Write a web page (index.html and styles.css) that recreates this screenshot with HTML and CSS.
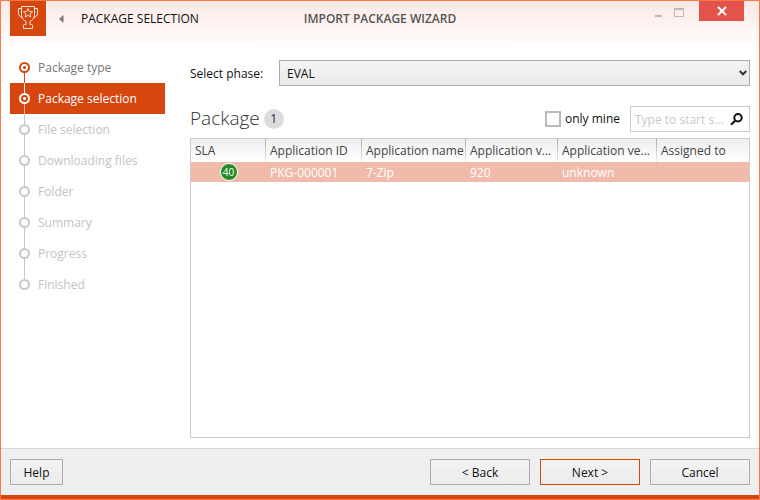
FILE: index.html
```html
<!DOCTYPE html>
<html lang="en">
<head>
<meta charset="utf-8">
<meta name="viewport" content="width=device-width, initial-scale=1">
<title>Import package wizard</title>
<link rel="stylesheet" href="styles.css">
</head>
<body>
<div class="window">
  <header class="titlebar">
    <div class="titlebar-left">
      <svg class="logo" width="36" height="35" viewBox="0 0 36 35" fill="none" stroke="#fbe0d5" stroke-width="1">
        <path d="M11.500 5.500h13v8c0 3-1.500 5.500-4.500 7v3h1.500c.6 0 1 .4 1 1v3h-9v-3c0-.6.4-1 1-1H16v-3c-3-1.500-4.500-4-4.500-7z"/>
        <path d="M11.500 7.500h-3v4.500c0 2.500 1.500 4 4 4.500M24.500 7.500h3v4.500c0 2.500-1.500 4-4 4.500"/>
        <path d="M18 7.500l1.300 3 3.200.3-2.400 2.100.7 3.100-2.800-1.600-2.800 1.600.7-3.100-2.400-2.100 3.200-.3z"/>
      </svg>
      <button class="back-arrow" type="button" aria-label="Previous page"><svg width="5" height="8" viewBox="0 0 5 8"><path d="M4.500 0v8L0 4z" fill="#7f7b7a"/></svg></button>
      <span class="page-name">PACKAGE SELECTION</span>
    </div>
    <h1 class="window-title">IMPORT PACKAGE WIZARD</h1>
    <div class="window-controls">
      <button class="control" type="button" aria-label="Minimize"><svg width="8" height="12" viewBox="0 0 8 12"><path d="M0 8h7v2H0z" fill="#bdb7b5"/></svg></button>
      <button class="control" type="button" aria-label="Maximize"><svg width="11" height="10" viewBox="0 0 11 10"><path d="M0 0h10v9H0zM1 2v6h8V2z" fill="#bdb7b5" fill-rule="evenodd"/></svg></button>
      <button class="control close" type="button" aria-label="Close"><svg width="10" height="10" viewBox="0 0 10 10"><path d="M1 1l8 8M9 1L1 9" stroke="#fff" stroke-width="2"/></svg></button>
    </div>
  </header>

  <div class="body">
    <nav aria-label="Wizard steps">
      <ol class="steps">
        <li class="step done"><span class="marker"></span>Package type</li>
        <li class="step active" aria-current="step"><span class="marker"></span>Package selection</li>
        <li class="step"><span class="marker"></span>File selection</li>
        <li class="step"><span class="marker"></span>Downloading files</li>
        <li class="step"><span class="marker"></span>Folder</li>
        <li class="step"><span class="marker"></span>Summary</li>
        <li class="step"><span class="marker"></span>Progress</li>
        <li class="step"><span class="marker"></span>Finished</li>
      </ol>
    </nav>

    <main class="content">
      <div class="phase">
        <label class="phase-label" for="phase">Select phase:</label>
        <div class="select-box">
          <select id="phase"><option>EVAL</option></select>
          <svg class="chevron" width="8" height="6" viewBox="0 0 8 6" fill="none" stroke="#333" stroke-width="2"><path d="M.7 1L4 4.300 7.300 1"/></svg>
        </div>
      </div>

      <div class="toolbar">
        <h2 class="heading">Package</h2>
        <span class="count">1</span>
        <label class="only-mine"><input type="checkbox">only mine</label>
        <div class="search">
          <input type="text" placeholder="Type to start s..." aria-label="Search packages">
          <svg width="13" height="13" viewBox="0 0 13 13" fill="none" stroke="#111" stroke-width="2"><circle cx="8" cy="4.800" r="3.700"/><path d="M5.300 7.500L1 11.800"/></svg>
        </div>
      </div>

      <div class="grid">
        <table>
          <colgroup><col class="c-sla"><col class="c-id"><col class="c-name"><col class="c-version"><col class="c-vendor"><col></colgroup>
          <thead>
            <tr><th>SLA</th><th>Application ID</th><th>Application name</th><th>Application v...</th><th>Application ve...</th><th>Assigned to</th></tr>
          </thead>
          <tbody>
            <tr><td class="sla"><span class="sla-badge">40</span></td><td>PKG-000001</td><td>7-Zip</td><td>920</td><td>unknown</td><td></td></tr>
          </tbody>
        </table>
      </div>
    </main>
  </div>

  <footer class="footer">
    <button class="btn help" type="button">Help</button>
    <button class="btn" type="button">&lt; Back</button>
    <button class="btn primary" type="button">Next &gt;</button>
    <button class="btn" type="button">Cancel</button>
  </footer>
</div>
</body>
</html>
```
FILE: styles.css
```css
* {
  box-sizing: border-box;
}

body {
  margin: 0;
  font: 12px/16px "Open Sans", "Noto Sans", sans-serif;
  color: #111;
}

button,
input,
select {
  font: inherit;
  color: inherit;
}

.window {
  display: flex;
  flex-direction: column;
  min-height: 100vh;
  border: 1px solid #ff7845;
  background: #fff linear-gradient(#fbe9e5, #fff 50px) no-repeat;
}

/* Title bar */

.titlebar {
  display: grid;
  grid-template-columns: 1fr auto 1fr;
  align-items: center;
  padding: 0 9px;
}

.titlebar-left {
  display: flex;
  align-items: center;
  white-space: nowrap;
}

.logo {
  flex: none;
  background: #d5470f;
}

.back-arrow {
  display: flex;
  flex: none;
  margin: 0 17px 0 13px;
  padding: 0;
  border: 0;
  background: none;
}

.window-title {
  margin: 0;
  font-size: 12px;
  font-weight: 600;
  color: #555;
}

.window-controls {
  display: flex;
  align-self: start;
  justify-content: flex-end;
  margin-right: 6px;
}

.control {
  display: flex;
  align-items: center;
  justify-content: center;
  width: 20px;
  height: 24px;
  padding: 0;
  border: 0;
  background: none;
}

.control.close {
  width: 45px;
  height: 20px;
  margin-left: 10px;
  background: #e2544b;
}

/* Body */

.body {
  display: flex;
  flex: 1;
  gap: 25px;
  padding: 0 9px 10px;
}

.steps {
  width: 155px;
  margin: 0;
  padding: 16px 0 0;
  list-style: none;
}

.step {
  display: flex;
  align-items: center;
  gap: 8px;
  height: 31px;
  padding-left: 9px;
  color: #c3c3c3;
  --line: #c8c8c8;
  --line-next: #c8c8c8;
  --fill: #fff;
}

.step.done {
  color: #777;
  --line: #d5470f;
  --line-next: #d5470f;
}

.step.active {
  background: #d5470f;
  color: #fff;
  --line: #fff;
  --line-next: #e9b7a2;
  --fill: #d5470f;
}

.marker {
  position: relative;
  width: 11px;
  height: 11px;
  border: 2px solid var(--line);
  border-radius: 50%;
}

.step.done .marker,
.step.active .marker {
  background: radial-gradient(circle, var(--line) 1px, var(--fill) 2px);
}

.marker::before,
.marker::after {
  content: "";
  position: absolute;
  left: 3px;
  width: 1px;
  height: 10px;
  background: var(--line);
}

.marker::before {
  bottom: 100%;
  margin-bottom: 2px;
}

.marker::after {
  top: 100%;
  margin-top: 2px;
  background: var(--line-next);
}

.step:first-child .marker::before,
.step:last-child .marker::after {
  display: none;
}

.content {
  display: flex;
  flex: 1;
  flex-direction: column;
  min-width: 0;
  padding-top: 24px;
}

.phase {
  display: flex;
  align-items: center;
}

.phase-label {
  width: 89px;
  padding-top: 2px;
}

.select-box {
  position: relative;
  flex: 1;
}

select {
  display: block;
  width: 100%;
  height: 26px;
  padding: 1px 20px 0 7px;
  border: 1px solid #acacac;
  border-radius: 0;
  background: linear-gradient(#f3f3f3, #ebebeb);
  appearance: none;
}

.chevron {
  position: absolute;
  right: 3px;
  top: 10px;
  pointer-events: none;
}

.toolbar {
  display: flex;
  align-items: center;
  margin: 20px 0 6px;
}

.heading {
  margin: 0;
  padding-bottom: 2px;
  font-size: 19px;
  line-height: 22px;
  font-weight: 300;
  color: #333;
}

.count {
  width: 20px;
  height: 20px;
  margin-left: 4px;
  border-radius: 50%;
  background: #dcdcdc;
  line-height: 20px;
  text-align: center;
  color: #1c2b5a;
}

.only-mine {
  display: flex;
  align-items: center;
  gap: 4px;
  margin: 0 10px 0 auto;
}

.only-mine input {
  width: 16px;
  height: 16px;
  margin: 0;
  border: 2px solid #bababa;
  background: #fff;
  appearance: none;
}

.search {
  display: flex;
  align-items: center;
  width: 120px;
  height: 26px;
  padding: 0 6px 0 4px;
  border: 1px solid #ccc;
  background: #fff;
}

.search input {
  flex: 1;
  min-width: 0;
  padding: 2px 0 0;
  border: 0;
  background: none;
}

.search input::placeholder {
  color: #c8c8c8;
}

.grid {
  flex: 1;
  border: 1px solid #ccc;
  background: #fff;
}

table {
  width: 100%;
  table-layout: fixed;
  border-collapse: collapse;
}

.c-sla { width: 75px; }
.c-id { width: 96px; }
.c-name { width: 104px; }
.c-version { width: 92px; }
.c-vendor { width: 99px; }

th,
td {
  padding: 0 0 0 4px;
  font-weight: 400;
  text-align: left;
  white-space: nowrap;
}

th {
  height: 23px;
  background:
    linear-gradient(#aaa, #eee) right / 1px 100% no-repeat,
    linear-gradient(#eee, #fff);
  color: #444;
}

th:last-child {
  background: linear-gradient(#eee, #fff);
}

td {
  height: 20px;
  padding-top: 2px;
  background: #f0bbaa;
  color: #fff;
}

.sla {
  padding: 0;
  text-align: center;
}

.sla-badge {
  display: block;
  width: 18px;
  height: 18px;
  margin: 0 auto;
  border: 1px solid #fff;
  border-radius: 50%;
  background: #228b22;
  font-size: 10px;
  line-height: 16px;
}

/* Footer */

.footer {
  display: flex;
  gap: 10px;
  padding: 10px 9px;
  border-top: 1px solid #d5d5d5;
  border-bottom: 4px solid #d5470f;
  background: #efefef;
}

.btn {
  width: 100px;
  height: 26px;
  padding: 1px 0 0;
  border: 1px solid #acacac;
  background: linear-gradient(#f3f3f3, #ebebeb);
}

.btn.help {
  width: 53px;
  margin-right: auto;
}

.btn.primary {
  border-color: #d5470f;
}
```
